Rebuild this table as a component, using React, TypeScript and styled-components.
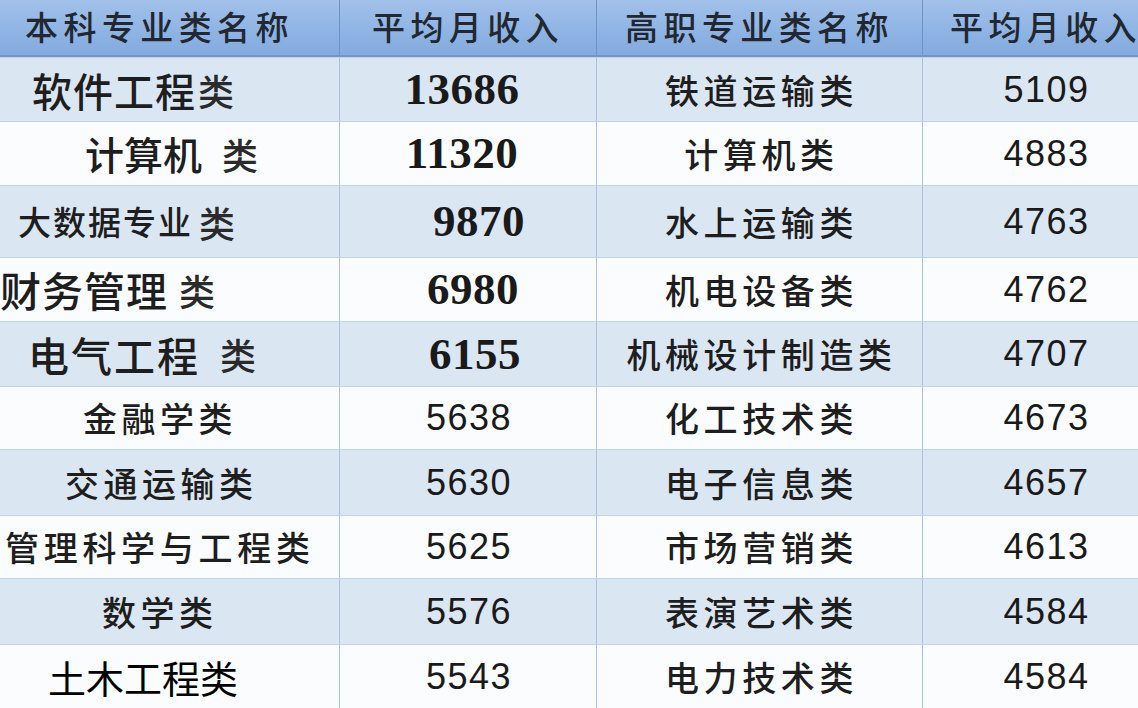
import * as React from 'react'
import styled, { createGlobalStyle } from 'styled-components'

const GlobalStyle = createGlobalStyle`
    html, body {
        margin: 0;
        padding: 0;
        background: #ffffff;
        overflow: hidden;
    }
    body {
        font-family: "Noto Sans CJK SC", "Noto Sans", sans-serif;
        color: #1c1c1c;
    }
`

const CJK = '"Noto Sans CJK SC", "Noto Sans", sans-serif'

interface Segment {
    text: string
    size: number
    ls?: number
    gap?: number
    black?: boolean
    soft?: boolean
}

interface IncomeRow {
    name: Segment[]
    indent: number
    income: string
    serif: boolean
    incomeShift: number
    college: string
    collegeIncome: string
    height: number
}

const rows: IncomeRow[] = [
    { name: [{ text: '软件工程', size: 40, ls: 1 }, { text: '类', size: 36, gap: 2, soft: true }], indent: 32, income: '13686', serif: true, incomeShift: -12, college: '铁道运输类', collegeIncome: '5109', height: 64 },
    { name: [{ text: '计算机', size: 39, ls: 0 }, { text: '类', size: 36, gap: 20, soft: true }], indent: 85, income: '11320', serif: true, incomeShift: -12, college: '计算机类', collegeIncome: '4883', height: 64 },
    { name: [{ text: '大数据专业', size: 33, ls: 2 }, { text: '类', size: 36, gap: 6, soft: true }], indent: 18, income: '9870', serif: true, incomeShift: 22, college: '水上运输类', collegeIncome: '4763', height: 72 },
    { name: [{ text: '财务管理', size: 41, ls: 1 }, { text: '类', size: 36, gap: 11, soft: true }], indent: 0, income: '6980', serif: true, incomeShift: 10, college: '机电设备类', collegeIncome: '4762', height: 64 },
    { name: [{ text: '电气工程', size: 41, ls: 2 }, { text: '类', size: 36, gap: 20, soft: true }], indent: 28, income: '6155', serif: true, incomeShift: 14, college: '机械设计制造类', collegeIncome: '4707', height: 65 },
    { name: [{ text: '金融学类', size: 34, ls: 4.5 }], indent: 83, income: '5638', serif: false, incomeShift: 2, college: '化工技术类', collegeIncome: '4673', height: 63 },
    { name: [{ text: '交通运输类', size: 34, ls: 4.5 }], indent: 65, income: '5630', serif: false, incomeShift: 2, college: '电子信息类', collegeIncome: '4657', height: 66 },
    { name: [{ text: '管理科学与工程类', size: 34, ls: 4.7 }], indent: 5, income: '5625', serif: false, incomeShift: 2, college: '市场营销类', collegeIncome: '4613', height: 63 },
    { name: [{ text: '数学类', size: 34, ls: 4.5 }], indent: 102, income: '5576', serif: false, incomeShift: 2, college: '表演艺术类', collegeIncome: '4584', height: 66 },
    { name: [{ text: '土木工程类', size: 38, ls: 0, black: true }], indent: 48, income: '5543', serif: false, incomeShift: 2, college: '电力技术类', collegeIncome: '4584', height: 64 },
]

const Table = styled.div`
    display: flex;
    flex-direction: column;
    width: 1138px;
    height: 708px;
    overflow: hidden;
`

const Row = styled.div<{ $height: number; $shade: boolean }>`
    display: grid;
    grid-template-columns: 340px 257px 326px 215px;
    height: ${p => p.$height}px;
    box-sizing: border-box;
    background: ${p => p.$shade ? '#dbe6f3' : '#fbfcfe'};
    border-top: 1px solid #c2d2e7;
    flex-shrink: 0;
`

const HeaderRow = styled.div`
    display: grid;
    grid-template-columns: 340px 257px 326px 215px;
    height: 57px;
    box-sizing: border-box;
    background: linear-gradient(#a2c1ea, #8bb1e2 70%, #85abdf);
    border-bottom: 2px solid #7396c8;
    flex-shrink: 0;
`

const Cell = styled.div<{ $align?: 'start' | 'center'; $pad?: number; $last?: boolean }>`
    display: flex;
    align-items: center;
    justify-content: ${p => p.$align === 'start' ? 'flex-start' : 'center'};
    padding-left: ${p => p.$pad ?? 0}px;
    box-sizing: border-box;
    border-right: ${p => p.$last ? 'none' : '1px solid #a9c0de'};
    white-space: nowrap;
    overflow: hidden;
    line-height: 1;
`

const HeaderCell = styled(Cell)`
    border-right-color: #6f92c4;
`

const HeadText = styled.span<{ $nudge?: number }>`
    font-family: ${CJK};
    font-size: 33px;
    font-weight: 500;
    letter-spacing: 5.4px;
    color: #222831;
    margin-top: -2px;
    margin-right: ${p => p.$nudge ?? 0}px;
`

const NameText = styled.span<{ $size: number; $ls: number; $gap: number; $black?: boolean; $soft?: boolean }>`
    font-family: ${CJK};
    font-size: ${p => p.$size}px;
    letter-spacing: ${p => p.$ls}px;
    margin-left: ${p => p.$gap}px;
    color: ${p => p.$black ? '#000000' : p.$soft ? '#2a2a2a' : '#1e1e1e'};
    font-weight: ${p => p.$black ? 400 : 500};
`

const CollegeText = styled.span`
    font-family: ${CJK};
    font-size: 34px;
    font-weight: 500;
    letter-spacing: 4.6px;
    color: #1e1e1e;
    margin-right: -4px;
`

const Amount = styled.span<{ $serif: boolean }>`
    font-family: ${p => p.$serif ? '"Liberation Serif", serif' : '"Liberation Sans", Arial, sans-serif'};
    font-size: ${p => p.$serif ? '45px' : '36px'};
    font-weight: ${p => p.$serif ? 700 : 400};
    letter-spacing: ${p => p.$serif ? '0.5px' : '1.5px'};
    color: #1a1a1a;
`

export default function App() {
    return <>
        <GlobalStyle />
        <Table>
            <HeaderRow>
                <HeaderCell><HeadText $nudge={20}>本科专业类名称</HeadText></HeaderCell>
                <HeaderCell><HeadText>平均月收入</HeadText></HeaderCell>
                <HeaderCell><HeadText>高职专业类名称</HeadText></HeaderCell>
                <HeaderCell $align='start' $pad={27} $last><HeadText>平均月收入</HeadText></HeaderCell>
            </HeaderRow>
            { rows.map((row, i) => (
                <Row key={i} $height={row.height} $shade={i % 2 === 0}>
                    <Cell $align='start' $pad={row.indent}>
                        { row.name.map((seg, j) => (
                            <NameText key={j} $size={seg.size} $ls={seg.ls ?? 0} $gap={seg.gap ?? 0} $black={seg.black} $soft={seg.soft}>{seg.text}</NameText>
                        )) }
                    </Cell>
                    <Cell $pad={row.incomeShift > 0 ? row.incomeShift : 0}>
                        <Amount $serif={row.serif} style={row.incomeShift < 0 ? { marginRight: -row.incomeShift } : undefined}>{row.income}</Amount>
                    </Cell>
                    <Cell><CollegeText>{row.college}</CollegeText></Cell>
                    <Cell $pad={32} $last><Amount $serif={false}>{row.collegeIncome}</Amount></Cell>
                </Row>
            )) }
        </Table>
    </>
}
